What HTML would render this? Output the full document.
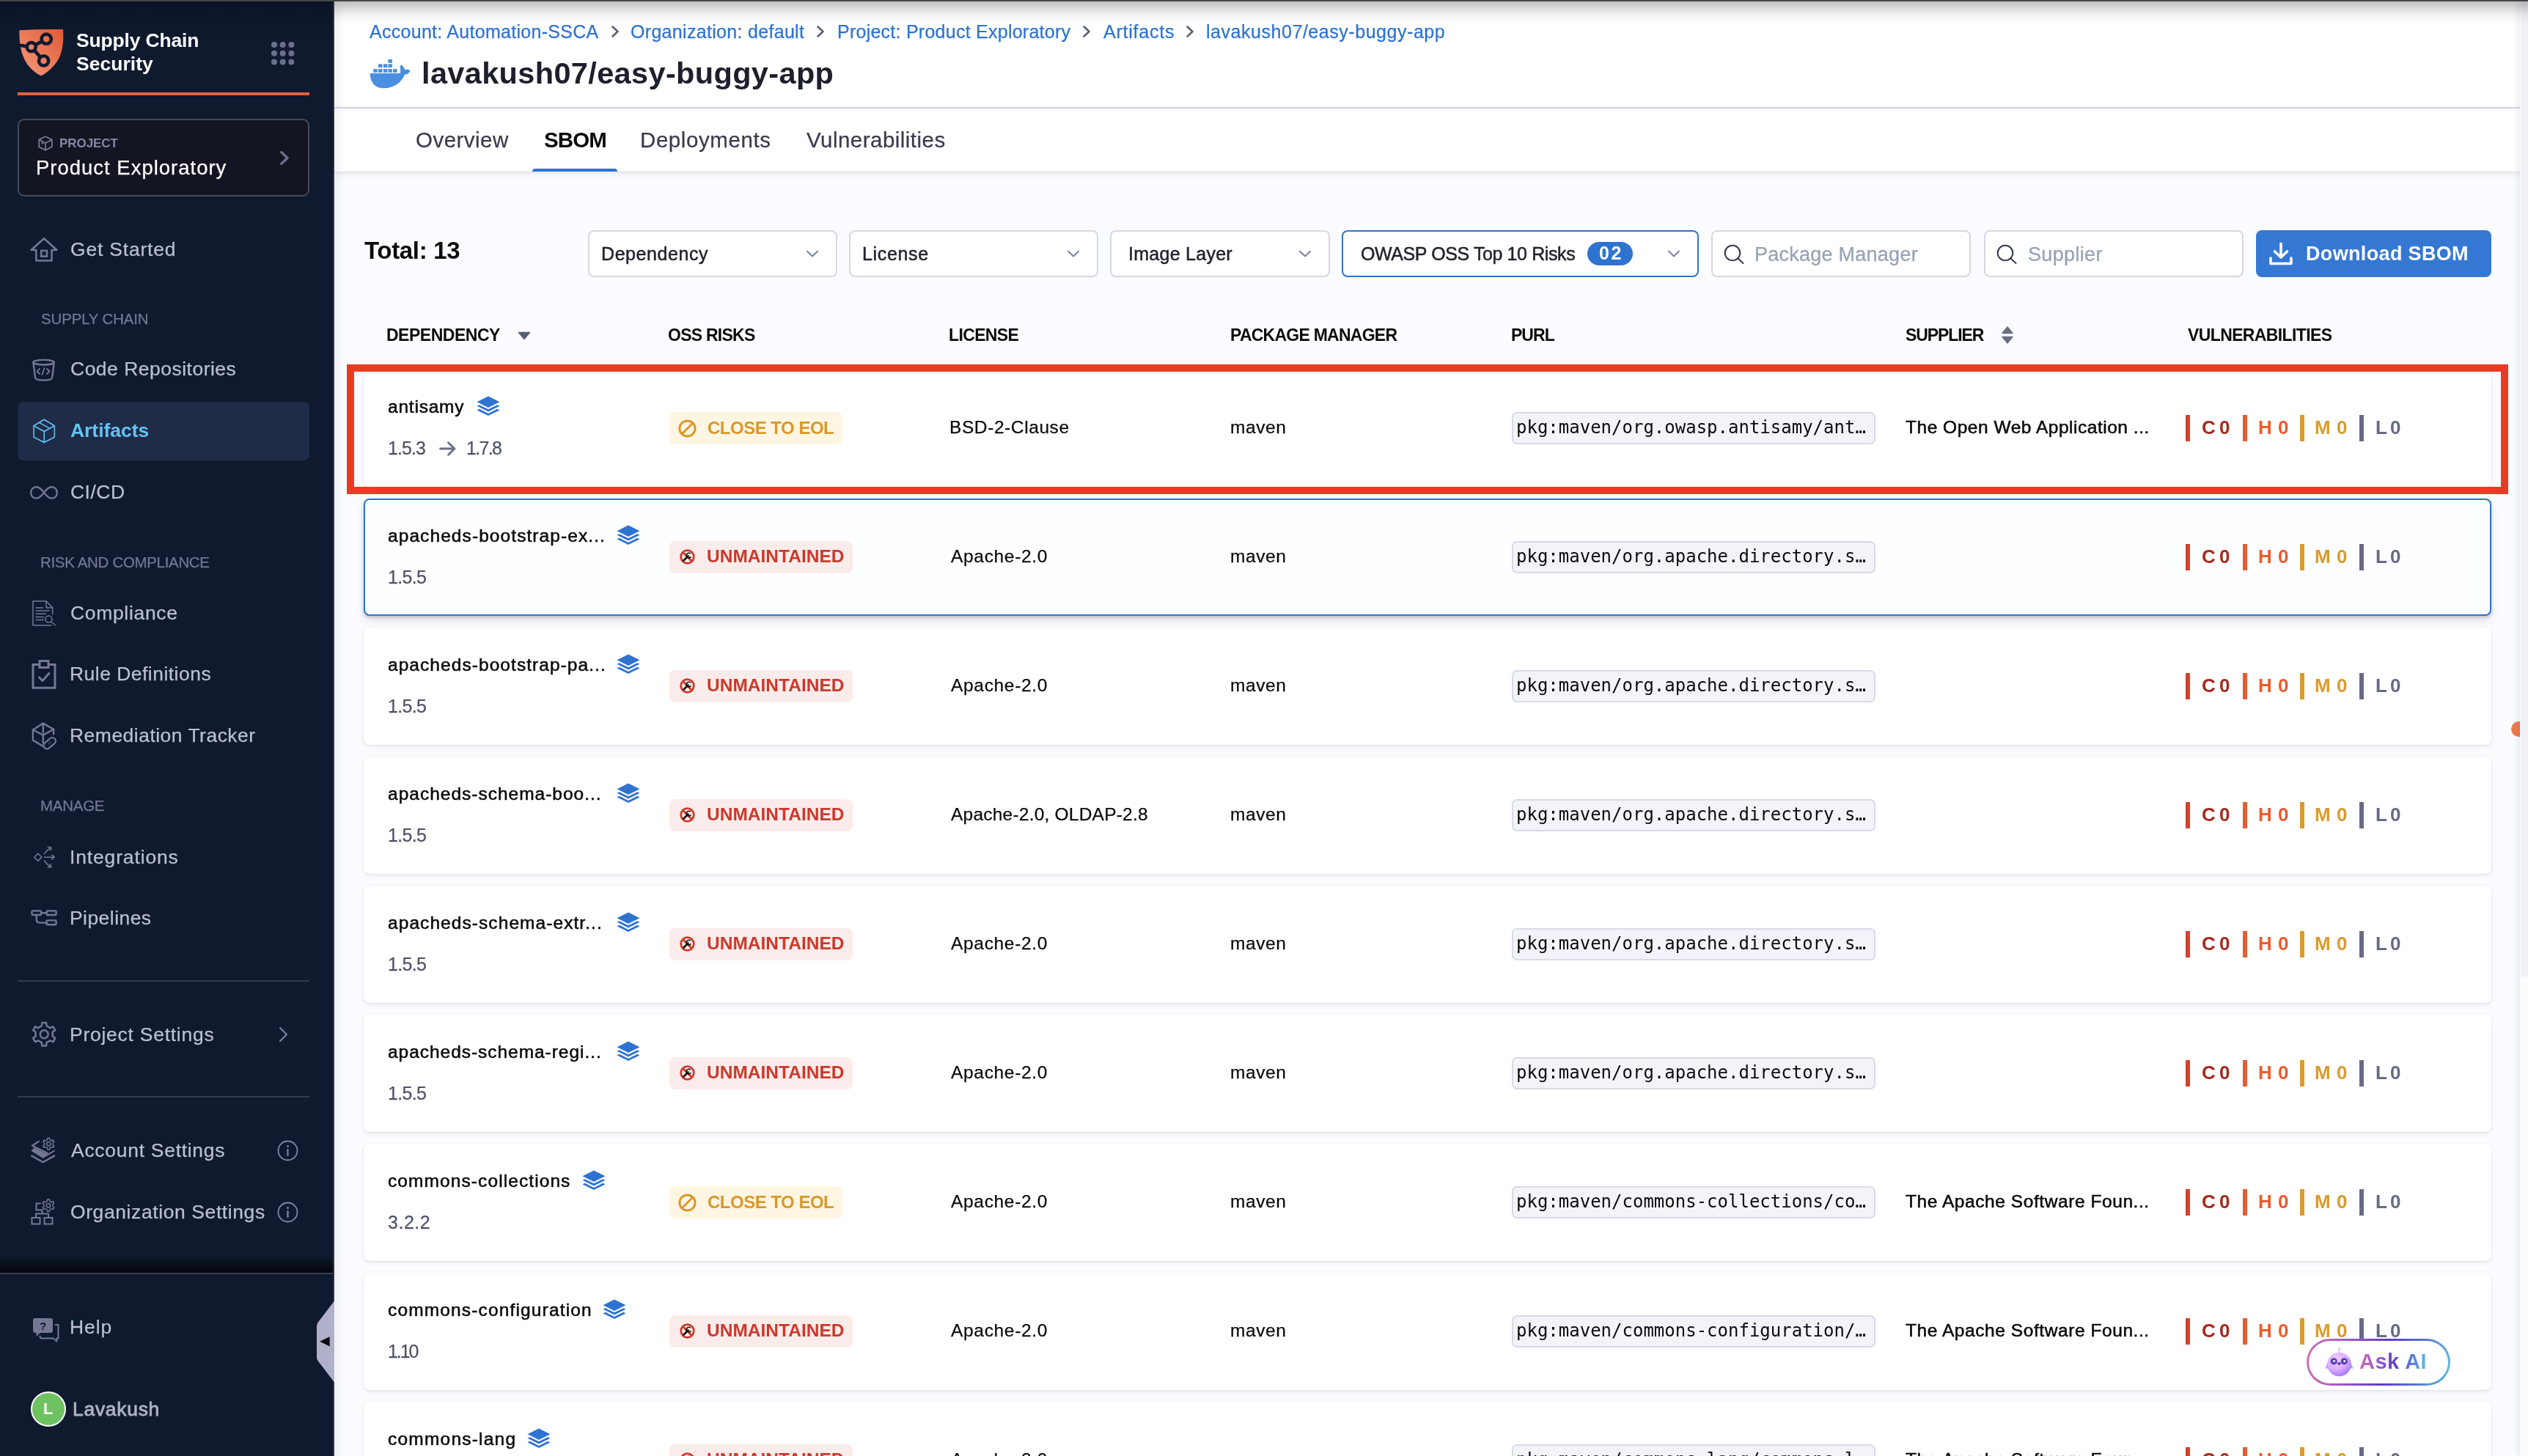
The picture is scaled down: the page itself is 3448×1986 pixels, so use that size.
<!DOCTYPE html>
<html lang="en"><head><meta charset="utf-8"><title>lavakush07/easy-buggy-app - SBOM</title>
<style>
*{box-sizing:border-box;margin:0;padding:0}
html,body{width:3448px;height:1986px;overflow:hidden}
body{position:relative;background:#fbfcff;font-family:"Liberation Sans",Arial,sans-serif;-webkit-font-smoothing:antialiased}
i{display:block;font-style:normal}
span{will-change:transform}
.avatar span{display:inline-block}
.r{-webkit-text-stroke:0.25px}
.topbar{position:absolute;left:0;top:0;width:3448px;height:2px;background:#444645;z-index:50}
.sidebar{position:absolute;left:0;top:0;width:456px;height:1986px;background:linear-gradient(#0b1426 0,#0f1a2e 60px,#0f1a2e 100%);border-right:2px solid #2f3044;overflow:hidden}
.orange-line{position:absolute;left:24px;top:126px;width:398px;height:4px;background:#e8613e}
.projbox{position:absolute;left:24px;top:162px;width:398px;height:106px;border:2px solid #464a5e;border-radius:9px;background:#141522}
.nav-active{position:absolute;left:24px;width:398px;height:80px;border-radius:8px;background:#1f2b47}
.sb-div{position:absolute;left:24px;width:398px;height:2px;background:#363a4c}
.sb-bottom-shadow{position:absolute;left:0;top:1712px;width:456px;height:24px;background:linear-gradient(rgba(0,0,0,0),rgba(0,0,0,.75))}
.sb-bottom-line{position:absolute;left:0;top:1736px;width:456px;height:2px;background:#3a3c4e}
.avatar{position:absolute;left:42px;top:1898px;width:48px;height:48px;border-radius:50%;background:#6ec25f;border:2.5px solid #fff;color:#fff;font-weight:bold;font-size:22px;line-height:43px;text-align:center}
.hdr{position:absolute;left:456px;top:0;width:2981px;height:148px;background:#fff;border-bottom:2px solid #d9dae6}
.tabsbar{position:absolute;left:456px;top:148px;width:2981px;height:86px;background:#fff;box-shadow:0 2px 10px rgba(40,41,61,.10),0 1px 2px rgba(40,41,61,.08)}
.topshade{position:absolute;left:456px;top:2px;width:2992px;height:34px;background:linear-gradient(rgba(0,0,0,.22) 0,rgba(0,0,0,.22) 3px,rgba(0,0,0,.16) 8px,rgba(0,0,0,.10) 13px,rgba(0,0,0,.055) 18px,rgba(0,0,0,.027) 23px,rgba(0,0,0,0) 30px);z-index:20}
.leftshade{position:absolute;left:457px;top:0;width:14px;height:1986px;background:linear-gradient(90deg,rgba(20,22,40,.05),rgba(20,22,40,.03) 40%,rgba(20,22,40,0));z-index:20}
.tab-underline{position:absolute;left:726px;top:230px;width:116px;height:4px;background:#2f73d1;border-radius:4px 4px 0 0}
.dd{position:absolute;top:314px;height:63.5px;border:2px solid #d6d7e4;border-radius:8px;background:#fff}
.dd.act{border-color:#2f73d1}
.cnt{position:absolute;left:2165px;top:330px;width:62px;height:32px;border-radius:16px;background:#2f73d1}
.btn{position:absolute;left:3077px;top:314px;width:321px;height:63.5px;border-radius:8px;background:#3578d3}
.card{position:absolute;left:496px;width:2902px;height:160px;background:#fff;border-radius:8px;box-shadow:0 1px 3px rgba(40,41,61,.10),0 3px 8px rgba(96,97,112,.08)}
.card.sel{border:2px solid #2f73d1;background:#fdfeff;box-shadow:0 2px 4px rgba(40,41,61,.2),0 6px 12px rgba(96,97,112,.18)}
.badge{position:absolute;left:913px;height:44px;border-radius:8px}
.badge.eol{width:235.5px;background:#fef6e2}
.badge.unm{width:249.5px;background:#faeceb}
.purl{position:absolute;left:2062px;width:495.5px;height:44px;border:2px solid #d9dae6;border-radius:7px;background:#f3f3fa;overflow:hidden}
.purl span{position:absolute;left:4px;top:-1px;font-family:"DejaVu Sans Mono","Liberation Mono",monospace;font-size:24px;line-height:40px;color:#0b0b0d;white-space:nowrap}
.vb{position:absolute;width:6px;height:36px}
.redbox{position:absolute;left:473px;top:497px;width:2948px;height:177px;border:10px solid #e63c24;z-index:10}
.rstrip{position:absolute;left:3437px;top:2px;width:11px;height:1984px;background:#fbfbfd;box-shadow:-3px 0 8px rgba(40,41,61,.10);z-index:15}
.rthumb{position:absolute;left:3438px;top:2px;width:10px;height:1331px;background:#f1f0f7;border-radius:0 0 5px 5px;z-index:16}
.odot{position:absolute;left:3425px;top:983.5px;width:12px;height:21px;background:#ee7a4b;border-radius:10.5px 0 0 10.5px;z-index:14}
.askai{position:absolute;left:3146px;top:1826px;width:196px;height:64px;border-radius:32px;background:linear-gradient(100deg,#d673b4 0%,#9c55c8 30%,#5a3bd2 55%,#5b7fd6 80%,#5fc0dc 100%);z-index:30}
.askai-in{position:absolute;left:3px;top:3px;right:3px;bottom:3px;border-radius:29px;background:#fff}
.askai-t{background:linear-gradient(95deg,#d070b0 0%,#8a4fcf 35%,#5a40d0 55%,#5b86d8 80%,#62c2dc 100%);-webkit-background-clip:text;background-clip:text;color:transparent !important;-webkit-text-fill-color:transparent}
</style></head>
<body>
<div class="topbar"></div>
<nav class="sidebar">
<svg style="position:absolute;left:24px;top:39px;" width="64" height="65" viewBox="0 0 64 65" fill="none"><defs><linearGradient id="shg" x1="0" y1="1" x2="1" y2="0"><stop offset="0" stop-color="#f39a7e"/><stop offset="1" stop-color="#e25a35"/></linearGradient></defs>
<path d="M2.5 2.2 Q32 0.5 62 1 Q64.5 34 50 50 Q41 60 32 64.5 Q22 60 13.5 49 Q1.5 32 2.5 2.2Z" fill="url(#shg)"/>
<g stroke="#0f1a2e" stroke-width="4.6" stroke-linecap="round"><path d="M18.7 25.1 L39.2 14.2"/><path d="M18.7 25.1 L35.6 43.9"/><path d="M18.7 25.1 L3 22.8"/></g>
<circle cx="39.2" cy="14.2" r="6.6" fill="#e8714e" stroke="#0f1a2e" stroke-width="4.6"/>
<circle cx="18.7" cy="25.1" r="6" fill="#ee8566" stroke="#0f1a2e" stroke-width="4.6"/>
<circle cx="35.6" cy="43.9" r="6.6" fill="#ec7d5c" stroke="#0f1a2e" stroke-width="4.6"/></svg>
<span style="position:absolute;left:103.8px;top:42.2px;font-size:26.5px;line-height:26.5px;font-weight:bold;color:#fff;letter-spacing:-0.17px;white-space:nowrap;">Supply Chain</span>
<span style="position:absolute;left:103.8px;top:74.4px;font-size:26.5px;line-height:26.5px;font-weight:bold;color:#fff;letter-spacing:0.04px;white-space:nowrap;">Security</span>
<svg style="position:absolute;left:369.8px;top:57px;" width="32" height="32" viewBox="0 0 32 32" fill="none"><circle cx="4.0" cy="4.0" r="4" fill="#6b6f89"/><circle cx="4.0" cy="15.7" r="4" fill="#6b6f89"/><circle cx="4.0" cy="27.4" r="4" fill="#6b6f89"/><circle cx="15.7" cy="4.0" r="4" fill="#6b6f89"/><circle cx="15.7" cy="15.7" r="4" fill="#6b6f89"/><circle cx="15.7" cy="27.4" r="4" fill="#6b6f89"/><circle cx="27.4" cy="4.0" r="4" fill="#6b6f89"/><circle cx="27.4" cy="15.7" r="4" fill="#6b6f89"/><circle cx="27.4" cy="27.4" r="4" fill="#6b6f89"/></svg>
<div class="orange-line"></div>
<div class="projbox"></div>
<svg style="position:absolute;left:52.3px;top:184.6px;" width="20" height="21" viewBox="0 0 21 22" fill="none"><g stroke="#8386a2" stroke-width="1.6" stroke-linejoin="round"><path d="M10.5 1.2 L19.8 5.8 V16 L10.5 20.8 L1.2 16 V5.8Z"/><path d="M1.2 5.8 L10.5 10.6 L19.8 5.8M10.5 10.6V20.8"/><path d="M4.5 10.2 L7.5 11.7"/></g></svg>
<span style="position:absolute;left:81.2px;top:186.9px;font-size:17px;line-height:17px;font-weight:bold;color:#8789a5;letter-spacing:-0.07px;white-space:nowrap;">PROJECT</span>
<span class="r" style="position:absolute;left:48.7px;top:214.9px;font-size:27.5px;line-height:27.5px;color:#fff;letter-spacing:0.99px;white-space:nowrap;">Product Exploratory</span>
<svg style="position:absolute;left:380px;top:204px;" width="16" height="23" viewBox="0 0 16 23" fill="none"><path d="M3.8 3.6 L12 11.5 L3.8 19.4" stroke="#6d708b" stroke-width="3.4" stroke-linecap="round" stroke-linejoin="round"/></svg>
<svg style="position:absolute;left:40px;top:321px;" width="40" height="38" viewBox="0 0 40 38" fill="none"><g stroke="#747892" stroke-width="2.5" stroke-linejoin="miter" stroke-linecap="butt"><path d="M20 4.2 L37.4 20 H30.6 V34.4 H9.3 V20 H2.6 Z" stroke-linejoin="round"/><rect x="16.2" y="20.9" width="7.8" height="7.7"/></g></svg>
<span class="r" style="position:absolute;left:95.7px;top:326.8px;font-size:26.5px;line-height:26.5px;color:#bcbfd3;letter-spacing:0.80px;white-space:nowrap;">Get Started</span>
<span class="r" style="position:absolute;left:55.7px;top:425.3px;font-size:20.5px;line-height:20.5px;color:#747892;letter-spacing:-0.17px;white-space:nowrap;">SUPPLY CHAIN</span>
<svg style="position:absolute;left:42px;top:488px;" width="34" height="34" viewBox="0 0 34 34" fill="none"><g stroke="#747892" stroke-width="2.4" stroke-linecap="round" stroke-linejoin="round"><ellipse cx="17.6" cy="6.2" rx="14.2" ry="3.3"/><path d="M3.4 6.2 L6 27 C6.4 29.6 11.6 30.6 17.6 30.6 C23.6 30.6 28.8 29.6 29.2 27 L31.8 6.2"/></g><g stroke="#747892" stroke-width="1.8" stroke-linecap="round" stroke-linejoin="round"><path d="M12 15 L8.5 18.5 L12 22"/><path d="M22 15 L25.5 18.5 L22 22"/><path d="M18.6 14 L15.4 23"/></g></svg>
<span class="r" style="position:absolute;left:95.7px;top:490.3px;font-size:26.5px;line-height:26.5px;color:#bcbfd3;letter-spacing:0.49px;white-space:nowrap;">Code Repositories</span>
<div class="nav-active" style="top:547.5px"></div>
<svg style="position:absolute;left:44px;top:570px;" width="33" height="36" viewBox="0 0 33 36" fill="none"><g stroke="#5ec2f4" stroke-width="1.6" stroke-linejoin="round" stroke-linecap="round"><path d="M16.2 2.3 L30.3 10.8 V26.2 L16.2 33.5 L2.1 26.2 V10.8Z"/><path d="M2.1 10.8 L16.2 18.5 L30.3 10.8M16.2 18.5V33.5"/><path d="M9.4 6.4 L24 14.4"/></g></svg>
<span style="position:absolute;left:96.4px;top:574.3px;font-size:26.5px;line-height:26.5px;font-weight:bold;color:#62c3f3;letter-spacing:-0.04px;white-space:nowrap;">Artifacts</span>
<svg style="position:absolute;left:40px;top:659px;" width="40" height="24" viewBox="0 0 40 24" fill="none"><path d="M20 12.9 C16 7.5 13 5.2 9.8 5.2 C5.2 5.2 2.2 8.4 2.2 12.9 C2.2 17.4 5.2 20.6 9.8 20.6 C13 20.6 16 18.3 20 12.9 C24 7.5 27 5.2 30.2 5.2 C34.8 5.2 37.8 8.4 37.8 12.9 C37.8 17.4 34.8 20.6 30.2 20.6 C27 20.6 24 18.3 20 12.9Z" stroke="#747892" stroke-width="2.4" stroke-linecap="round" stroke-linejoin="round"/></svg>
<span class="r" style="position:absolute;left:95.7px;top:658.3px;font-size:26.5px;line-height:26.5px;color:#bcbfd3;letter-spacing:0.48px;white-space:nowrap;">CI/CD</span>
<span class="r" style="position:absolute;left:54.9px;top:756.8px;font-size:20.5px;line-height:20.5px;color:#747892;letter-spacing:-0.33px;white-space:nowrap;">RISK AND COMPLIANCE</span>
<svg style="position:absolute;left:42.8px;top:819px;" width="36" height="36" viewBox="0 0 36 36" fill="none"><g stroke="#747892" stroke-width="1.5" stroke-linecap="round" stroke-linejoin="round"><path d="M28.7 19 V10 L20.1 1 H2 V33.9 H27"/><path d="M20.1 1 V10 H28.7"/><path d="M6.1 10 H15.5 M6.1 14.1 H24 M6.1 18.3 H19.5 M6.1 22.4 H16.5 M6.1 26.5 H16"/><circle cx="23.4" cy="25.5" r="4.6"/><path d="M26.8 29 L32.8 34"/></g></svg>
<span class="r" style="position:absolute;left:95.7px;top:822.8px;font-size:26.5px;line-height:26.5px;color:#bcbfd3;letter-spacing:0.67px;white-space:nowrap;">Compliance</span>
<svg style="position:absolute;left:42px;top:898px;" width="36" height="44" viewBox="0 0 36 44" fill="none"><g stroke="#747892" stroke-width="3" stroke-linejoin="miter"><path d="M12 8.5 H3 V40.3 H33 V8.5 H24"/><rect x="12" y="3.5" width="12" height="9"/></g><path d="M11.5 26 L16 30.5 L25 20.5" stroke="#747892" stroke-width="3" stroke-linejoin="round" stroke-linecap="round"/></svg>
<span class="r" style="position:absolute;left:94.8px;top:906.3px;font-size:26.5px;line-height:26.5px;color:#bcbfd3;letter-spacing:0.47px;white-space:nowrap;">Rule Definitions</span>
<svg style="position:absolute;left:42px;top:985px;" width="36" height="40" viewBox="0 0 36 40" fill="none"><g stroke="#747892" stroke-width="2.4" stroke-linecap="round" stroke-linejoin="round"><path d="M31.1 16.4 V9.8 L16.8 1.6 L2.9 10.5 V24.7 L16.8 32.9"/><path d="M2.9 10.5 L16.8 17.7 L31.1 9.8"/><path d="M16.8 1.6 V14.6 M16.8 17.7 V28.3"/></g><g transform="rotate(-40 25.7 28.8)"><rect x="16.4" y="24.3" width="18.6" height="9" rx="4.5" fill="#0f1a2e" stroke="#747892" stroke-width="2.2"/><path d="M24 28.8 H24.8 M26.8 28.8 H27.6" stroke="#747892" stroke-width="2.6"/></g></svg>
<span class="r" style="position:absolute;left:94.8px;top:990.3px;font-size:26.5px;line-height:26.5px;color:#bcbfd3;letter-spacing:0.48px;white-space:nowrap;">Remediation Tracker</span>
<span class="r" style="position:absolute;left:54.9px;top:1088.8px;font-size:20.5px;line-height:20.5px;color:#747892;letter-spacing:-0.26px;white-space:nowrap;">MANAGE</span>
<svg style="position:absolute;left:45px;top:1153px;" width="32" height="32" viewBox="0 0 32 32" fill="none"><g stroke="#747892" stroke-width="1.5" stroke-linecap="round" stroke-linejoin="round"><path d="M1.7 16.3 L6.8 11.2 L11.9 16.3 L6.8 21.4Z"/><path d="M15.4 16.2 H29 M25.6 13.2 L29.2 16.2 L25.6 19.2"/><path d="M15.4 11.6 Q19.5 6 24.4 3 M20.4 2.6 L24.6 2.8 L24.2 7"/><path d="M15.4 21 Q19.5 26.6 24.4 29.5 M20.4 30 L24.6 29.7 L24.2 25.5"/></g></svg>
<span class="r" style="position:absolute;left:94.6px;top:1155.8px;font-size:26.5px;line-height:26.5px;color:#bcbfd3;letter-spacing:0.85px;white-space:nowrap;">Integrations</span>
<svg style="position:absolute;left:41px;top:1240px;" width="38" height="26" viewBox="0 0 38 26" fill="none"><g stroke="#747892" stroke-width="2.4" stroke-linecap="round" stroke-linejoin="round"><rect x="2.5" y="2.4" width="12.6" height="5.6" rx="1.2"/><rect x="22.6" y="2.4" width="13" height="5.6" rx="1.2"/><rect x="22.6" y="15.4" width="13" height="5.8" rx="1.2"/><path d="M15.1 5.2 H22.6"/><path d="M8.8 8 V14.6 Q8.8 18.6 12.8 18.6 H22.6"/></g></svg>
<span class="r" style="position:absolute;left:94.8px;top:1239.3px;font-size:26.5px;line-height:26.5px;color:#bcbfd3;letter-spacing:0.44px;white-space:nowrap;">Pipelines</span>
<div class="sb-div" style="top:1337px"></div>
<svg style="position:absolute;left:43px;top:1393px;" width="34" height="36" viewBox="0 0 34 36" fill="none"><path d="M13.88 6.27 L14.37 1.95 L20.03 1.95 L20.52 6.27 L25.44 9.11 L29.42 7.37 L32.25 12.28 L28.76 14.86 L28.76 20.54 L32.25 23.12 L29.42 28.03 L25.44 26.29 L20.52 29.13 L20.03 33.45 L14.37 33.45 L13.88 29.13 L8.96 26.29 L4.98 28.03 L2.15 23.12 L5.64 20.54 L5.64 14.86 L2.15 12.28 L4.98 7.37 L8.96 9.11Z" stroke="#747892" stroke-width="2.5" stroke-linejoin="round"/><circle cx="17.2" cy="17.7" r="5.5" stroke="#747892" stroke-width="2.5"/></svg>
<span class="r" style="position:absolute;left:94.8px;top:1398.0px;font-size:26.5px;line-height:26.5px;color:#bcbfd3;letter-spacing:0.74px;white-space:nowrap;">Project Settings</span>
<svg style="position:absolute;left:378px;top:1399px;" width="16" height="24" viewBox="0 0 16 24" fill="none"><path d="M4 3 L13 12 L4 21" stroke="#8386a2" stroke-width="2" stroke-linecap="round" stroke-linejoin="round"/></svg>
<div class="sb-div" style="top:1495px"></div>
<svg style="position:absolute;left:42px;top:1550px;" width="36" height="38" viewBox="0 0 36 38" fill="none"><path d="M11 6.9 L1.8 12.7 L22.6 22.8" stroke="#747892" stroke-width="2.2" stroke-linecap="round" stroke-linejoin="round"/><path d="M0.4 19.7 L4.4 15.4 L22.6 24 L32.4 18.4 L33 20.3 L16.7 30 Z" fill="#747892"/><path d="M1.4 26.6 L16.7 35.3 L31.9 26.6" stroke="#747892" stroke-width="2.4" stroke-linecap="round" stroke-linejoin="round"/><path d="M22.65 4.53 L22.88 2.33 L25.72 2.33 L25.95 4.53 L28.38 5.94 L30.41 5.04 L31.83 7.49 L30.03 8.79 L30.03 11.61 L31.83 12.91 L30.41 15.36 L28.38 14.46 L25.95 15.87 L25.72 18.07 L22.88 18.07 L22.65 15.87 L20.22 14.46 L18.19 15.36 L16.77 12.91 L18.57 11.61 L18.57 8.79 L16.77 7.49 L18.19 5.04 L20.22 5.94Z" stroke="#747892" stroke-width="1.5" stroke-linejoin="round" fill="#0f1a2e"/><circle cx="24.3" cy="10.2" r="2.6" stroke="#747892" stroke-width="1.5"/></svg>
<span class="r" style="position:absolute;left:96.9px;top:1555.8px;font-size:26.5px;line-height:26.5px;color:#bcbfd3;letter-spacing:0.71px;white-space:nowrap;">Account Settings</span>
<svg style="position:absolute;left:377.5px;top:1554.5px;" width="29" height="29" viewBox="0 0 29 29" fill="none"><circle cx="14.5" cy="14.5" r="13" stroke="#8386a2" stroke-width="1.8"/><path d="M14.5 13 V21" stroke="#8386a2" stroke-width="2.2" stroke-linecap="round"/><circle cx="14.5" cy="8.5" r="1.5" fill="#8386a2"/></svg>
<svg style="position:absolute;left:42px;top:1635px;" width="36" height="38" viewBox="0 0 36 38" fill="none"><g stroke="#747892" stroke-width="2" stroke-linejoin="miter"><rect x="1.5" y="26" width="11" height="8.5"/><rect x="18.5" y="26" width="11" height="8.5"/><path d="M7 26 V20.5 H24 V26 M15.5 20.5 V15.5"/><path d="M14 6.5 H7.5 V15.5 H16"/></g><path d="M22.30 3.34 L22.53 1.03 L25.47 1.03 L25.70 3.34 L28.22 4.80 L30.34 3.84 L31.81 6.39 L29.92 7.74 L29.92 10.66 L31.81 12.01 L30.34 14.56 L28.22 13.60 L25.70 15.06 L25.47 17.37 L22.53 17.37 L22.30 15.06 L19.78 13.60 L17.66 14.56 L16.19 12.01 L18.08 10.66 L18.08 7.74 L16.19 6.39 L17.66 3.84 L19.78 4.80Z" stroke="#747892" stroke-width="1.5" stroke-linejoin="round" fill="#0f1a2e"/><circle cx="24" cy="9.2" r="2.8" stroke="#747892" stroke-width="1.5"/></svg>
<span class="r" style="position:absolute;left:95.8px;top:1639.8px;font-size:26.5px;line-height:26.5px;color:#bcbfd3;letter-spacing:0.59px;white-space:nowrap;">Organization Settings</span>
<svg style="position:absolute;left:377.5px;top:1638.5px;" width="29" height="29" viewBox="0 0 29 29" fill="none"><circle cx="14.5" cy="14.5" r="13" stroke="#8386a2" stroke-width="1.8"/><path d="M14.5 13 V21" stroke="#8386a2" stroke-width="2.2" stroke-linecap="round"/><circle cx="14.5" cy="8.5" r="1.5" fill="#8386a2"/></svg>
<div class="sb-bottom-shadow"></div><div class="sb-bottom-line"></div>
<svg style="position:absolute;left:44px;top:1797px;" width="38" height="34" viewBox="0 0 38 34" fill="none"><path d="M4 1 H25 Q28 1 28 4 V18 Q28 21 25 21 H11 L5.5 26 V21 H4 Q1 21 1 18 V4 Q1 1 4 1Z" fill="#747892"/><path d="M31.5 10 H35.5 V28.5 H33.5 V32.5 L28.5 28.5 H13 Q10.5 28.5 10.5 25.5" stroke="#747892" stroke-width="2" stroke-linejoin="round" stroke-linecap="round"/><text x="14.5" y="16.5" font-family="Liberation Sans, sans-serif" font-weight="bold" font-size="15" fill="#0f1a2e" text-anchor="middle">?</text></svg>
<span class="r" style="position:absolute;left:94.8px;top:1796.8px;font-size:26.5px;line-height:26.5px;color:#bcbfd3;letter-spacing:0.88px;white-space:nowrap;">Help</span>
<div class="avatar"><span>L</span></div>
<span style="position:absolute;left:99.3px;top:1909.0px;font-size:26.5px;line-height:26.5px;color:#b0b2c9;letter-spacing:0.70px;white-space:nowrap;-webkit-text-stroke:0.8px #b0b2c9;">Lavakush</span>
</nav>
<svg style="position:absolute;left:430px;top:1772px;z-index:5;" width="26" height="116" viewBox="0 0 26 116" fill="none"><path d="M26 2.5 L3.5 32 Q2 34 2 37 V79 Q2 82 3.5 84 L26 113.5Z" fill="#b0b1c8"/><path d="M6 57.7 L19.7 51.2 V64.5Z" fill="#0b0b12"/></svg>
<main>
<header class="hdr"></header><div class="tabsbar"></div><div class="tabshadow"></div>
<div class="breadcrumbs">
<span class="r" style="position:absolute;left:504.3px;top:30.9px;font-size:25px;line-height:25px;color:#2e72d0;letter-spacing:0.28px;white-space:nowrap;">Account: Automation-SSCA</span>
<span class="r" style="position:absolute;left:860.4px;top:30.9px;font-size:25px;line-height:25px;color:#2e72d0;letter-spacing:0.31px;white-space:nowrap;">Organization: default</span>
<span class="r" style="position:absolute;left:1141.5px;top:30.9px;font-size:25px;line-height:25px;color:#2e72d0;letter-spacing:0.25px;white-space:nowrap;">Project: Product Exploratory</span>
<span class="r" style="position:absolute;left:1504.5px;top:30.9px;font-size:25px;line-height:25px;color:#2e72d0;letter-spacing:0.77px;white-space:nowrap;">Artifacts</span>
<span class="r" style="position:absolute;left:1644.8px;top:30.9px;font-size:25px;line-height:25px;color:#2e72d0;letter-spacing:0.54px;white-space:nowrap;">lavakush07/easy-buggy-app</span>
<svg style="position:absolute;left:833px;top:34px;" width="12" height="18" viewBox="0 0 12 18" fill="none"><path d="M2.5 2.5 L9.5 9 L2.5 15.5" stroke="#566074" stroke-width="2.6" stroke-linecap="round" stroke-linejoin="round"/></svg>
<svg style="position:absolute;left:1113px;top:34px;" width="12" height="18" viewBox="0 0 12 18" fill="none"><path d="M2.5 2.5 L9.5 9 L2.5 15.5" stroke="#566074" stroke-width="2.6" stroke-linecap="round" stroke-linejoin="round"/></svg>
<svg style="position:absolute;left:1476px;top:34px;" width="12" height="18" viewBox="0 0 12 18" fill="none"><path d="M2.5 2.5 L9.5 9 L2.5 15.5" stroke="#566074" stroke-width="2.6" stroke-linecap="round" stroke-linejoin="round"/></svg>
<svg style="position:absolute;left:1617px;top:34px;" width="12" height="18" viewBox="0 0 12 18" fill="none"><path d="M2.5 2.5 L9.5 9 L2.5 15.5" stroke="#566074" stroke-width="2.6" stroke-linecap="round" stroke-linejoin="round"/></svg>
</div>
<svg style="position:absolute;left:504px;top:80px;" width="57" height="41" viewBox="0 0 57 41" fill="none"><g fill="#4a90e2"><rect x="5.2" y="14.1" width="5.5" height="4.8"/><rect x="12" y="14.1" width="5.5" height="4.8"/><rect x="18.9" y="14.1" width="5.5" height="4.8"/><rect x="25.4" y="14.1" width="5.5" height="4.8"/><rect x="32.1" y="14.1" width="5.5" height="4.8"/><rect x="12" y="7.3" width="5.5" height="4.8"/><rect x="18.9" y="7.3" width="5.5" height="4.8"/><rect x="25.4" y="7.3" width="5.5" height="4.8"/><rect x="25.4" y="1" width="5.5" height="4.8"/><path d="M0.8 19.9 L41.2 19.9 C42.8 17.5 42.2 14 41.6 12 C41.2 10.5 42.5 9.2 43.7 8.6 C45.5 10 47.5 12.2 48.2 15 C50.5 14.2 53.5 14.8 55.6 16.4 C54 20 51 21.8 48 21.8 C43.5 33 33 40.3 19.5 40.3 C7 40.3 0.5 31.5 0.8 19.9 Z"/></g></svg>
<span style="position:absolute;left:575.1px;top:79.0px;font-size:41.5px;line-height:41.5px;font-weight:bold;color:#1e1f2c;letter-spacing:0.35px;white-space:nowrap;">lavakush07/easy-buggy-app</span>
<div class="tabs">
<span class="r" style="position:absolute;left:567.2px;top:176.1px;font-size:29.5px;line-height:29.5px;color:#3a3c4d;letter-spacing:0.48px;white-space:nowrap;">Overview</span>
<span style="position:absolute;left:742.2px;top:176.1px;font-size:29.5px;line-height:29.5px;font-weight:bold;color:#0b0b0d;letter-spacing:-0.91px;white-space:nowrap;">SBOM</span>
<span class="r" style="position:absolute;left:873.1px;top:176.1px;font-size:29.5px;line-height:29.5px;color:#3a3c4d;letter-spacing:0.58px;white-space:nowrap;">Deployments</span>
<span class="r" style="position:absolute;left:1099.7px;top:176.1px;font-size:29.5px;line-height:29.5px;color:#3a3c4d;letter-spacing:0.47px;white-space:nowrap;">Vulnerabilities</span>
<div class="tab-underline"></div></div>
<div class="topshade"></div><div class="leftshade"></div>
<div class="toolbar">
<span style="position:absolute;left:496.8px;top:324.9px;font-size:33px;line-height:33px;font-weight:bold;color:#0b0b0d;letter-spacing:-0.34px;white-space:nowrap;">Total: 13</span>
<div class="dd" style="left:802px;width:339.6px"></div>
<span style="position:absolute;left:820.0px;top:333.8px;font-size:25px;line-height:25px;color:#22222e;letter-spacing:0.58px;white-space:nowrap;-webkit-text-stroke:0.5px #22222e;">Dependency</span>
<svg style="position:absolute;left:1098px;top:340px;" width="20" height="13" viewBox="0 0 20 13" fill="none"><path d="M3 2.8 L10 9.4 L17 2.8" stroke="#7d80a0" stroke-width="2" stroke-linecap="round" stroke-linejoin="round"/></svg>
<div class="dd" style="left:1158.4px;width:339.2px"></div>
<span style="position:absolute;left:1175.5px;top:333.8px;font-size:25px;line-height:25px;color:#22222e;letter-spacing:0.66px;white-space:nowrap;-webkit-text-stroke:0.5px #22222e;">License</span>
<svg style="position:absolute;left:1454px;top:340px;" width="20" height="13" viewBox="0 0 20 13" fill="none"><path d="M3 2.8 L10 9.4 L17 2.8" stroke="#7d80a0" stroke-width="2" stroke-linecap="round" stroke-linejoin="round"/></svg>
<div class="dd" style="left:1514px;width:299.5px"></div>
<span style="position:absolute;left:1538.7px;top:333.8px;font-size:25px;line-height:25px;color:#22222e;letter-spacing:0.27px;white-space:nowrap;-webkit-text-stroke:0.5px #22222e;">Image Layer</span>
<svg style="position:absolute;left:1770px;top:340px;" width="20" height="13" viewBox="0 0 20 13" fill="none"><path d="M3 2.8 L10 9.4 L17 2.8" stroke="#7d80a0" stroke-width="2" stroke-linecap="round" stroke-linejoin="round"/></svg>
<div class="dd act" style="left:1830px;width:486.5px"></div>
<span style="position:absolute;left:1856.3px;top:333.8px;font-size:25px;line-height:25px;color:#22222e;letter-spacing:-0.40px;white-space:nowrap;-webkit-text-stroke:0.5px #22222e;">OWASP OSS Top 10 Risks</span>
<div class="cnt"></div>
<span style="position:absolute;left:2180.5px;top:333.0px;font-size:25px;line-height:25px;font-weight:bold;color:#fff;letter-spacing:2.65px;white-space:nowrap;">02</span>
<svg style="position:absolute;left:2273px;top:340px;" width="20" height="13" viewBox="0 0 20 13" fill="none"><path d="M3 2.8 L10 9.4 L17 2.8" stroke="#7d80a0" stroke-width="2" stroke-linecap="round" stroke-linejoin="round"/></svg>
<div class="dd" style="left:2333.5px;width:354.5px"></div>
<svg style="position:absolute;left:2351px;top:333px;" width="29" height="28" viewBox="0 0 29 28" fill="none"><circle cx="12" cy="12" r="10.3" stroke="#3c3f50" stroke-width="2.1"/><path d="M19.5 19.5 L26.5 26" stroke="#3c3f50" stroke-width="2.1" stroke-linecap="round"/></svg>
<span class="r" style="position:absolute;left:2393.1px;top:333.7px;font-size:27px;line-height:27px;color:#97a1b4;letter-spacing:0.25px;white-space:nowrap;">Package Manager</span>
<div class="dd" style="left:2705.5px;width:354.5px"></div>
<svg style="position:absolute;left:2723px;top:333px;" width="29" height="28" viewBox="0 0 29 28" fill="none"><circle cx="12" cy="12" r="10.3" stroke="#3c3f50" stroke-width="2.1"/><path d="M19.5 19.5 L26.5 26" stroke="#3c3f50" stroke-width="2.1" stroke-linecap="round"/></svg>
<span class="r" style="position:absolute;left:2766.2px;top:333.7px;font-size:27px;line-height:27px;color:#97a1b4;letter-spacing:0.33px;white-space:nowrap;">Supplier</span>
<div class="btn"></div>
<svg style="position:absolute;left:3094px;top:329px;" width="34" height="34" viewBox="0 0 34 34" fill="none"><g stroke="#fff" stroke-width="3.6" stroke-linecap="round" stroke-linejoin="round"><path d="M17 3.5 V21.5"/><path d="M8.5 14 L17 22 L25.5 14"/><path d="M3 23 V30.5 H31 V23"/></g></svg>
<span style="position:absolute;left:3144.5px;top:333.1px;font-size:27px;line-height:27px;font-weight:bold;color:#fff;letter-spacing:0.34px;white-space:nowrap;">Download SBOM</span>
<span style="position:absolute;left:526.7px;top:445.7px;font-size:23px;line-height:23px;font-weight:bold;color:#0b0b0d;letter-spacing:-0.49px;white-space:nowrap;">DEPENDENCY</span>
<span style="position:absolute;left:911.0px;top:445.7px;font-size:23px;line-height:23px;font-weight:bold;color:#0b0b0d;letter-spacing:-0.75px;white-space:nowrap;">OSS RISKS</span>
<span style="position:absolute;left:1294.0px;top:445.7px;font-size:23px;line-height:23px;font-weight:bold;color:#0b0b0d;letter-spacing:-0.63px;white-space:nowrap;">LICENSE</span>
<span style="position:absolute;left:1677.5px;top:445.7px;font-size:23px;line-height:23px;font-weight:bold;color:#0b0b0d;letter-spacing:-0.75px;white-space:nowrap;">PACKAGE MANAGER</span>
<span style="position:absolute;left:2061.0px;top:445.7px;font-size:23px;line-height:23px;font-weight:bold;color:#0b0b0d;letter-spacing:-0.97px;white-space:nowrap;">PURL</span>
<span style="position:absolute;left:2599.4px;top:445.7px;font-size:23px;line-height:23px;font-weight:bold;color:#0b0b0d;letter-spacing:-1.09px;white-space:nowrap;">SUPPLIER</span>
<span style="position:absolute;left:2983.5px;top:445.7px;font-size:23px;line-height:23px;font-weight:bold;color:#0b0b0d;letter-spacing:-0.62px;white-space:nowrap;">VULNERABILITIES</span>
<svg style="position:absolute;left:705.5px;top:452px;" width="18" height="12" viewBox="0 0 18 12" fill="none"><path d="M1.5 1.5 H16.5 L9 10.5Z" fill="#5a5d78" stroke="#5a5d78" stroke-width="1.5" stroke-linejoin="round"/></svg>
<svg style="position:absolute;left:2729px;top:444px;" width="18" height="26" viewBox="0 0 18 26" fill="none"><path d="M2 10.5 L9 2 L16 10.5Z M2 15.5 L9 24 L16 15.5Z" fill="#6b6d85" stroke="#6b6d85" stroke-width="1.5" stroke-linejoin="round"/></svg>
</div>
<div class="table">
<section class="row">
<div class="card" style="top:504px"></div>
<span style="position:absolute;left:529.4px;top:542.9px;font-size:24.5px;line-height:24.5px;color:#0b0b0d;letter-spacing:0.79px;white-space:nowrap;-webkit-text-stroke:0.55px #0b0b0d;">antisamy</span>
<svg style="position:absolute;left:649.5px;top:540px;" width="32" height="28" viewBox="0 0 32 28" fill="none"><g fill="#2f73d1"><path d="M16 0.5 L31.5 8.2 L16 15.9 L0.5 8.2Z"/><path d="M3.7 12.2 L0.5 13.8 L16 21.5 L31.5 13.8 L28.3 12.2 L16 18.3Z"/><path d="M3.7 17.8 L0.5 19.4 L16 27.1 L31.5 19.4 L28.3 17.8 L16 23.9Z"/></g></svg>
<span class="r" style="position:absolute;left:528.5px;top:599.0px;font-size:25px;line-height:25px;color:#4f5168;letter-spacing:-0.91px;white-space:nowrap;">1.5.3</span>
<svg style="position:absolute;left:598px;top:601px;" width="25" height="22" viewBox="0 0 25 22" fill="none"><path d="M2.5 11 H21.5 M13.5 2.8 L22 11 L13.5 19.2" stroke="#6b6d85" stroke-width="2.8" stroke-linecap="round" stroke-linejoin="round"/></svg>
<span class="r" style="position:absolute;left:636.1px;top:599.0px;font-size:25px;line-height:25px;color:#4f5168;letter-spacing:-1.66px;white-space:nowrap;">1.7.8</span>
<div class="badge eol" style="top:562px"></div>
<svg style="position:absolute;left:924.5px;top:571.5px;" width="25" height="25" viewBox="0 0 25 25" fill="none"><circle cx="12.5" cy="12.5" r="10.6" stroke="#d9982b" stroke-width="3"/><path d="M5.3 19.7 L19.7 5.3" stroke="#d9982b" stroke-width="3"/></svg>
<span style="position:absolute;left:964.6px;top:571.6px;font-size:24px;line-height:24px;font-weight:bold;color:#d9982b;letter-spacing:-0.50px;white-space:nowrap;">CLOSE TO EOL</span>
<span class="r" style="position:absolute;left:1294.5px;top:571.1px;font-size:24.5px;line-height:24.5px;color:#0b0b0d;letter-spacing:0.59px;white-space:nowrap;">BSD-2-Clause</span>
<span class="r" style="position:absolute;left:1678.4px;top:571.1px;font-size:24.5px;line-height:24.5px;color:#0b0b0d;letter-spacing:0.57px;white-space:nowrap;">maven</span>
<div class="purl" style="top:562px"><span>pkg:maven/org.owasp.antisamy/ant…</span></div>
<span style="position:absolute;left:2599.0px;top:571.1px;font-size:24.5px;line-height:24.5px;color:#0b0b0d;letter-spacing:0.52px;white-space:nowrap;-webkit-text-stroke:0.55px #0b0b0d;">The Open Web Application ...</span>
<i class="vb" style="left:2981px;top:566px;background:#d0432e"></i><span style="position:absolute;left:3002.9px;top:570.3px;font-size:26px;line-height:26px;font-weight:bold;color:#a52a1d;white-space:nowrap;">C</span><span style="position:absolute;left:3026.8px;top:570.3px;font-size:26px;line-height:26px;font-weight:bold;color:#a52a1d;white-space:nowrap;">0</span><i class="vb" style="left:3059px;top:566px;background:#ea5c2e"></i><span style="position:absolute;left:3079.8px;top:570.3px;font-size:26px;line-height:26px;font-weight:bold;color:#ea5c2e;white-space:nowrap;">H</span><span style="position:absolute;left:3106.7px;top:570.3px;font-size:26px;line-height:26px;font-weight:bold;color:#ea5c2e;white-space:nowrap;">0</span><i class="vb" style="left:3137px;top:566px;background:#d99b2e"></i><span style="position:absolute;left:3157.3px;top:570.3px;font-size:26px;line-height:26px;font-weight:bold;color:#d99b2e;white-space:nowrap;">M</span><span style="position:absolute;left:3186.5px;top:570.3px;font-size:26px;line-height:26px;font-weight:bold;color:#d99b2e;white-space:nowrap;">0</span><i class="vb" style="left:3217.8px;top:566px;background:#686a85"></i><span style="position:absolute;left:3239.9px;top:570.3px;font-size:26px;line-height:26px;font-weight:bold;color:#686a85;white-space:nowrap;">L</span><span style="position:absolute;left:3260.0px;top:570.3px;font-size:26px;line-height:26px;font-weight:bold;color:#686a85;white-space:nowrap;">0</span>
</section>
<section class="row">
<div class="card sel" style="top:680px"></div>
<span style="position:absolute;left:529.4px;top:718.9px;font-size:24.5px;line-height:24.5px;color:#0b0b0d;letter-spacing:1.08px;white-space:nowrap;-webkit-text-stroke:0.55px #0b0b0d;">apacheds-bootstrap-ex...</span>
<svg style="position:absolute;left:840.5px;top:716px;" width="32" height="28" viewBox="0 0 32 28" fill="none"><g fill="#2f73d1"><path d="M16 0.5 L31.5 8.2 L16 15.9 L0.5 8.2Z"/><path d="M3.7 12.2 L0.5 13.8 L16 21.5 L31.5 13.8 L28.3 12.2 L16 18.3Z"/><path d="M3.7 17.8 L0.5 19.4 L16 27.1 L31.5 19.4 L28.3 17.8 L16 23.9Z"/></g></svg>
<span class="r" style="position:absolute;left:528.5px;top:775.0px;font-size:25px;line-height:25px;color:#4f5168;letter-spacing:-0.67px;white-space:nowrap;">1.5.5</span>
<div class="badge unm" style="top:738px"></div>
<svg style="position:absolute;left:926.5px;top:749px;" width="21" height="21" viewBox="0 0 21 21" fill="none"><circle cx="10.5" cy="10.5" r="8.8" stroke="#cf3b2b" stroke-width="2.8"/><path d="M4.3 4.3 L16.7 16.7" stroke="#cf3b2b" stroke-width="2.8"/><path d="M5.5 15.5 L11.5 9.5" stroke="#111" stroke-width="2.6" stroke-linecap="round"/><path d="M14.8 6.2 A3.3 3.3 0 1 0 15.3 10.3" stroke="#111" stroke-width="1.7" fill="none"/></svg>
<span style="position:absolute;left:964.0px;top:747.1px;font-size:24.5px;line-height:24.5px;font-weight:bold;color:#cb392b;letter-spacing:0.01px;white-space:nowrap;">UNMAINTAINED</span>
<span class="r" style="position:absolute;left:1296.5px;top:747.1px;font-size:24.5px;line-height:24.5px;color:#0b0b0d;letter-spacing:0.68px;white-space:nowrap;">Apache-2.0</span>
<span class="r" style="position:absolute;left:1678.4px;top:747.1px;font-size:24.5px;line-height:24.5px;color:#0b0b0d;letter-spacing:0.57px;white-space:nowrap;">maven</span>
<div class="purl" style="top:738px"><span>pkg:maven/org.apache.directory.s…</span></div>
<i class="vb" style="left:2981px;top:742px;background:#d0432e"></i><span style="position:absolute;left:3002.9px;top:746.3px;font-size:26px;line-height:26px;font-weight:bold;color:#a52a1d;white-space:nowrap;">C</span><span style="position:absolute;left:3026.8px;top:746.3px;font-size:26px;line-height:26px;font-weight:bold;color:#a52a1d;white-space:nowrap;">0</span><i class="vb" style="left:3059px;top:742px;background:#ea5c2e"></i><span style="position:absolute;left:3079.8px;top:746.3px;font-size:26px;line-height:26px;font-weight:bold;color:#ea5c2e;white-space:nowrap;">H</span><span style="position:absolute;left:3106.7px;top:746.3px;font-size:26px;line-height:26px;font-weight:bold;color:#ea5c2e;white-space:nowrap;">0</span><i class="vb" style="left:3137px;top:742px;background:#d99b2e"></i><span style="position:absolute;left:3157.3px;top:746.3px;font-size:26px;line-height:26px;font-weight:bold;color:#d99b2e;white-space:nowrap;">M</span><span style="position:absolute;left:3186.5px;top:746.3px;font-size:26px;line-height:26px;font-weight:bold;color:#d99b2e;white-space:nowrap;">0</span><i class="vb" style="left:3217.8px;top:742px;background:#686a85"></i><span style="position:absolute;left:3239.9px;top:746.3px;font-size:26px;line-height:26px;font-weight:bold;color:#686a85;white-space:nowrap;">L</span><span style="position:absolute;left:3260.0px;top:746.3px;font-size:26px;line-height:26px;font-weight:bold;color:#686a85;white-space:nowrap;">0</span>
</section>
<section class="row">
<div class="card" style="top:856px"></div>
<span style="position:absolute;left:529.4px;top:894.9px;font-size:24.5px;line-height:24.5px;color:#0b0b0d;letter-spacing:1.06px;white-space:nowrap;-webkit-text-stroke:0.55px #0b0b0d;">apacheds-bootstrap-pa...</span>
<svg style="position:absolute;left:840.5px;top:892px;" width="32" height="28" viewBox="0 0 32 28" fill="none"><g fill="#2f73d1"><path d="M16 0.5 L31.5 8.2 L16 15.9 L0.5 8.2Z"/><path d="M3.7 12.2 L0.5 13.8 L16 21.5 L31.5 13.8 L28.3 12.2 L16 18.3Z"/><path d="M3.7 17.8 L0.5 19.4 L16 27.1 L31.5 19.4 L28.3 17.8 L16 23.9Z"/></g></svg>
<span class="r" style="position:absolute;left:528.5px;top:951.0px;font-size:25px;line-height:25px;color:#4f5168;letter-spacing:-0.67px;white-space:nowrap;">1.5.5</span>
<div class="badge unm" style="top:914px"></div>
<svg style="position:absolute;left:926.5px;top:925px;" width="21" height="21" viewBox="0 0 21 21" fill="none"><circle cx="10.5" cy="10.5" r="8.8" stroke="#cf3b2b" stroke-width="2.8"/><path d="M4.3 4.3 L16.7 16.7" stroke="#cf3b2b" stroke-width="2.8"/><path d="M5.5 15.5 L11.5 9.5" stroke="#111" stroke-width="2.6" stroke-linecap="round"/><path d="M14.8 6.2 A3.3 3.3 0 1 0 15.3 10.3" stroke="#111" stroke-width="1.7" fill="none"/></svg>
<span style="position:absolute;left:964.0px;top:923.1px;font-size:24.5px;line-height:24.5px;font-weight:bold;color:#cb392b;letter-spacing:0.01px;white-space:nowrap;">UNMAINTAINED</span>
<span class="r" style="position:absolute;left:1296.5px;top:923.1px;font-size:24.5px;line-height:24.5px;color:#0b0b0d;letter-spacing:0.68px;white-space:nowrap;">Apache-2.0</span>
<span class="r" style="position:absolute;left:1678.4px;top:923.1px;font-size:24.5px;line-height:24.5px;color:#0b0b0d;letter-spacing:0.57px;white-space:nowrap;">maven</span>
<div class="purl" style="top:914px"><span>pkg:maven/org.apache.directory.s…</span></div>
<i class="vb" style="left:2981px;top:918px;background:#d0432e"></i><span style="position:absolute;left:3002.9px;top:922.3px;font-size:26px;line-height:26px;font-weight:bold;color:#a52a1d;white-space:nowrap;">C</span><span style="position:absolute;left:3026.8px;top:922.3px;font-size:26px;line-height:26px;font-weight:bold;color:#a52a1d;white-space:nowrap;">0</span><i class="vb" style="left:3059px;top:918px;background:#ea5c2e"></i><span style="position:absolute;left:3079.8px;top:922.3px;font-size:26px;line-height:26px;font-weight:bold;color:#ea5c2e;white-space:nowrap;">H</span><span style="position:absolute;left:3106.7px;top:922.3px;font-size:26px;line-height:26px;font-weight:bold;color:#ea5c2e;white-space:nowrap;">0</span><i class="vb" style="left:3137px;top:918px;background:#d99b2e"></i><span style="position:absolute;left:3157.3px;top:922.3px;font-size:26px;line-height:26px;font-weight:bold;color:#d99b2e;white-space:nowrap;">M</span><span style="position:absolute;left:3186.5px;top:922.3px;font-size:26px;line-height:26px;font-weight:bold;color:#d99b2e;white-space:nowrap;">0</span><i class="vb" style="left:3217.8px;top:918px;background:#686a85"></i><span style="position:absolute;left:3239.9px;top:922.3px;font-size:26px;line-height:26px;font-weight:bold;color:#686a85;white-space:nowrap;">L</span><span style="position:absolute;left:3260.0px;top:922.3px;font-size:26px;line-height:26px;font-weight:bold;color:#686a85;white-space:nowrap;">0</span>
</section>
<section class="row">
<div class="card" style="top:1032px"></div>
<span style="position:absolute;left:529.4px;top:1070.9px;font-size:24.5px;line-height:24.5px;color:#0b0b0d;letter-spacing:1.00px;white-space:nowrap;-webkit-text-stroke:0.55px #0b0b0d;">apacheds-schema-boo...</span>
<svg style="position:absolute;left:840.5px;top:1068px;" width="32" height="28" viewBox="0 0 32 28" fill="none"><g fill="#2f73d1"><path d="M16 0.5 L31.5 8.2 L16 15.9 L0.5 8.2Z"/><path d="M3.7 12.2 L0.5 13.8 L16 21.5 L31.5 13.8 L28.3 12.2 L16 18.3Z"/><path d="M3.7 17.8 L0.5 19.4 L16 27.1 L31.5 19.4 L28.3 17.8 L16 23.9Z"/></g></svg>
<span class="r" style="position:absolute;left:528.5px;top:1127.0px;font-size:25px;line-height:25px;color:#4f5168;letter-spacing:-0.67px;white-space:nowrap;">1.5.5</span>
<div class="badge unm" style="top:1090px"></div>
<svg style="position:absolute;left:926.5px;top:1101px;" width="21" height="21" viewBox="0 0 21 21" fill="none"><circle cx="10.5" cy="10.5" r="8.8" stroke="#cf3b2b" stroke-width="2.8"/><path d="M4.3 4.3 L16.7 16.7" stroke="#cf3b2b" stroke-width="2.8"/><path d="M5.5 15.5 L11.5 9.5" stroke="#111" stroke-width="2.6" stroke-linecap="round"/><path d="M14.8 6.2 A3.3 3.3 0 1 0 15.3 10.3" stroke="#111" stroke-width="1.7" fill="none"/></svg>
<span style="position:absolute;left:964.0px;top:1099.1px;font-size:24.5px;line-height:24.5px;font-weight:bold;color:#cb392b;letter-spacing:0.01px;white-space:nowrap;">UNMAINTAINED</span>
<span class="r" style="position:absolute;left:1296.5px;top:1099.1px;font-size:24.5px;line-height:24.5px;color:#0b0b0d;letter-spacing:0.22px;white-space:nowrap;">Apache-2.0, OLDAP-2.8</span>
<span class="r" style="position:absolute;left:1678.4px;top:1099.1px;font-size:24.5px;line-height:24.5px;color:#0b0b0d;letter-spacing:0.57px;white-space:nowrap;">maven</span>
<div class="purl" style="top:1090px"><span>pkg:maven/org.apache.directory.s…</span></div>
<i class="vb" style="left:2981px;top:1094px;background:#d0432e"></i><span style="position:absolute;left:3002.9px;top:1098.3px;font-size:26px;line-height:26px;font-weight:bold;color:#a52a1d;white-space:nowrap;">C</span><span style="position:absolute;left:3026.8px;top:1098.3px;font-size:26px;line-height:26px;font-weight:bold;color:#a52a1d;white-space:nowrap;">0</span><i class="vb" style="left:3059px;top:1094px;background:#ea5c2e"></i><span style="position:absolute;left:3079.8px;top:1098.3px;font-size:26px;line-height:26px;font-weight:bold;color:#ea5c2e;white-space:nowrap;">H</span><span style="position:absolute;left:3106.7px;top:1098.3px;font-size:26px;line-height:26px;font-weight:bold;color:#ea5c2e;white-space:nowrap;">0</span><i class="vb" style="left:3137px;top:1094px;background:#d99b2e"></i><span style="position:absolute;left:3157.3px;top:1098.3px;font-size:26px;line-height:26px;font-weight:bold;color:#d99b2e;white-space:nowrap;">M</span><span style="position:absolute;left:3186.5px;top:1098.3px;font-size:26px;line-height:26px;font-weight:bold;color:#d99b2e;white-space:nowrap;">0</span><i class="vb" style="left:3217.8px;top:1094px;background:#686a85"></i><span style="position:absolute;left:3239.9px;top:1098.3px;font-size:26px;line-height:26px;font-weight:bold;color:#686a85;white-space:nowrap;">L</span><span style="position:absolute;left:3260.0px;top:1098.3px;font-size:26px;line-height:26px;font-weight:bold;color:#686a85;white-space:nowrap;">0</span>
</section>
<section class="row">
<div class="card" style="top:1208px"></div>
<span style="position:absolute;left:529.4px;top:1246.9px;font-size:24.5px;line-height:24.5px;color:#0b0b0d;letter-spacing:1.07px;white-space:nowrap;-webkit-text-stroke:0.55px #0b0b0d;">apacheds-schema-extr...</span>
<svg style="position:absolute;left:840.5px;top:1244px;" width="32" height="28" viewBox="0 0 32 28" fill="none"><g fill="#2f73d1"><path d="M16 0.5 L31.5 8.2 L16 15.9 L0.5 8.2Z"/><path d="M3.7 12.2 L0.5 13.8 L16 21.5 L31.5 13.8 L28.3 12.2 L16 18.3Z"/><path d="M3.7 17.8 L0.5 19.4 L16 27.1 L31.5 19.4 L28.3 17.8 L16 23.9Z"/></g></svg>
<span class="r" style="position:absolute;left:528.5px;top:1303.0px;font-size:25px;line-height:25px;color:#4f5168;letter-spacing:-0.67px;white-space:nowrap;">1.5.5</span>
<div class="badge unm" style="top:1266px"></div>
<svg style="position:absolute;left:926.5px;top:1277px;" width="21" height="21" viewBox="0 0 21 21" fill="none"><circle cx="10.5" cy="10.5" r="8.8" stroke="#cf3b2b" stroke-width="2.8"/><path d="M4.3 4.3 L16.7 16.7" stroke="#cf3b2b" stroke-width="2.8"/><path d="M5.5 15.5 L11.5 9.5" stroke="#111" stroke-width="2.6" stroke-linecap="round"/><path d="M14.8 6.2 A3.3 3.3 0 1 0 15.3 10.3" stroke="#111" stroke-width="1.7" fill="none"/></svg>
<span style="position:absolute;left:964.0px;top:1275.1px;font-size:24.5px;line-height:24.5px;font-weight:bold;color:#cb392b;letter-spacing:0.01px;white-space:nowrap;">UNMAINTAINED</span>
<span class="r" style="position:absolute;left:1296.5px;top:1275.1px;font-size:24.5px;line-height:24.5px;color:#0b0b0d;letter-spacing:0.68px;white-space:nowrap;">Apache-2.0</span>
<span class="r" style="position:absolute;left:1678.4px;top:1275.1px;font-size:24.5px;line-height:24.5px;color:#0b0b0d;letter-spacing:0.57px;white-space:nowrap;">maven</span>
<div class="purl" style="top:1266px"><span>pkg:maven/org.apache.directory.s…</span></div>
<i class="vb" style="left:2981px;top:1270px;background:#d0432e"></i><span style="position:absolute;left:3002.9px;top:1274.3px;font-size:26px;line-height:26px;font-weight:bold;color:#a52a1d;white-space:nowrap;">C</span><span style="position:absolute;left:3026.8px;top:1274.3px;font-size:26px;line-height:26px;font-weight:bold;color:#a52a1d;white-space:nowrap;">0</span><i class="vb" style="left:3059px;top:1270px;background:#ea5c2e"></i><span style="position:absolute;left:3079.8px;top:1274.3px;font-size:26px;line-height:26px;font-weight:bold;color:#ea5c2e;white-space:nowrap;">H</span><span style="position:absolute;left:3106.7px;top:1274.3px;font-size:26px;line-height:26px;font-weight:bold;color:#ea5c2e;white-space:nowrap;">0</span><i class="vb" style="left:3137px;top:1270px;background:#d99b2e"></i><span style="position:absolute;left:3157.3px;top:1274.3px;font-size:26px;line-height:26px;font-weight:bold;color:#d99b2e;white-space:nowrap;">M</span><span style="position:absolute;left:3186.5px;top:1274.3px;font-size:26px;line-height:26px;font-weight:bold;color:#d99b2e;white-space:nowrap;">0</span><i class="vb" style="left:3217.8px;top:1270px;background:#686a85"></i><span style="position:absolute;left:3239.9px;top:1274.3px;font-size:26px;line-height:26px;font-weight:bold;color:#686a85;white-space:nowrap;">L</span><span style="position:absolute;left:3260.0px;top:1274.3px;font-size:26px;line-height:26px;font-weight:bold;color:#686a85;white-space:nowrap;">0</span>
</section>
<section class="row">
<div class="card" style="top:1384px"></div>
<span style="position:absolute;left:529.4px;top:1422.9px;font-size:24.5px;line-height:24.5px;color:#0b0b0d;letter-spacing:0.96px;white-space:nowrap;-webkit-text-stroke:0.55px #0b0b0d;">apacheds-schema-regi...</span>
<svg style="position:absolute;left:840.5px;top:1420px;" width="32" height="28" viewBox="0 0 32 28" fill="none"><g fill="#2f73d1"><path d="M16 0.5 L31.5 8.2 L16 15.9 L0.5 8.2Z"/><path d="M3.7 12.2 L0.5 13.8 L16 21.5 L31.5 13.8 L28.3 12.2 L16 18.3Z"/><path d="M3.7 17.8 L0.5 19.4 L16 27.1 L31.5 19.4 L28.3 17.8 L16 23.9Z"/></g></svg>
<span class="r" style="position:absolute;left:528.5px;top:1479.0px;font-size:25px;line-height:25px;color:#4f5168;letter-spacing:-0.67px;white-space:nowrap;">1.5.5</span>
<div class="badge unm" style="top:1442px"></div>
<svg style="position:absolute;left:926.5px;top:1453px;" width="21" height="21" viewBox="0 0 21 21" fill="none"><circle cx="10.5" cy="10.5" r="8.8" stroke="#cf3b2b" stroke-width="2.8"/><path d="M4.3 4.3 L16.7 16.7" stroke="#cf3b2b" stroke-width="2.8"/><path d="M5.5 15.5 L11.5 9.5" stroke="#111" stroke-width="2.6" stroke-linecap="round"/><path d="M14.8 6.2 A3.3 3.3 0 1 0 15.3 10.3" stroke="#111" stroke-width="1.7" fill="none"/></svg>
<span style="position:absolute;left:964.0px;top:1451.1px;font-size:24.5px;line-height:24.5px;font-weight:bold;color:#cb392b;letter-spacing:0.01px;white-space:nowrap;">UNMAINTAINED</span>
<span class="r" style="position:absolute;left:1296.5px;top:1451.1px;font-size:24.5px;line-height:24.5px;color:#0b0b0d;letter-spacing:0.68px;white-space:nowrap;">Apache-2.0</span>
<span class="r" style="position:absolute;left:1678.4px;top:1451.1px;font-size:24.5px;line-height:24.5px;color:#0b0b0d;letter-spacing:0.57px;white-space:nowrap;">maven</span>
<div class="purl" style="top:1442px"><span>pkg:maven/org.apache.directory.s…</span></div>
<i class="vb" style="left:2981px;top:1446px;background:#d0432e"></i><span style="position:absolute;left:3002.9px;top:1450.3px;font-size:26px;line-height:26px;font-weight:bold;color:#a52a1d;white-space:nowrap;">C</span><span style="position:absolute;left:3026.8px;top:1450.3px;font-size:26px;line-height:26px;font-weight:bold;color:#a52a1d;white-space:nowrap;">0</span><i class="vb" style="left:3059px;top:1446px;background:#ea5c2e"></i><span style="position:absolute;left:3079.8px;top:1450.3px;font-size:26px;line-height:26px;font-weight:bold;color:#ea5c2e;white-space:nowrap;">H</span><span style="position:absolute;left:3106.7px;top:1450.3px;font-size:26px;line-height:26px;font-weight:bold;color:#ea5c2e;white-space:nowrap;">0</span><i class="vb" style="left:3137px;top:1446px;background:#d99b2e"></i><span style="position:absolute;left:3157.3px;top:1450.3px;font-size:26px;line-height:26px;font-weight:bold;color:#d99b2e;white-space:nowrap;">M</span><span style="position:absolute;left:3186.5px;top:1450.3px;font-size:26px;line-height:26px;font-weight:bold;color:#d99b2e;white-space:nowrap;">0</span><i class="vb" style="left:3217.8px;top:1446px;background:#686a85"></i><span style="position:absolute;left:3239.9px;top:1450.3px;font-size:26px;line-height:26px;font-weight:bold;color:#686a85;white-space:nowrap;">L</span><span style="position:absolute;left:3260.0px;top:1450.3px;font-size:26px;line-height:26px;font-weight:bold;color:#686a85;white-space:nowrap;">0</span>
</section>
<section class="row">
<div class="card" style="top:1560px"></div>
<span style="position:absolute;left:529.4px;top:1598.9px;font-size:24.5px;line-height:24.5px;color:#0b0b0d;letter-spacing:1.09px;white-space:nowrap;-webkit-text-stroke:0.55px #0b0b0d;">commons-collections</span>
<svg style="position:absolute;left:793.5px;top:1596px;" width="32" height="28" viewBox="0 0 32 28" fill="none"><g fill="#2f73d1"><path d="M16 0.5 L31.5 8.2 L16 15.9 L0.5 8.2Z"/><path d="M3.7 12.2 L0.5 13.8 L16 21.5 L31.5 13.8 L28.3 12.2 L16 18.3Z"/><path d="M3.7 17.8 L0.5 19.4 L16 27.1 L31.5 19.4 L28.3 17.8 L16 23.9Z"/></g></svg>
<span class="r" style="position:absolute;left:529.4px;top:1655.0px;font-size:25px;line-height:25px;color:#4f5168;letter-spacing:0.52px;white-space:nowrap;">3.2.2</span>
<div class="badge eol" style="top:1618px"></div>
<svg style="position:absolute;left:924.5px;top:1627.5px;" width="25" height="25" viewBox="0 0 25 25" fill="none"><circle cx="12.5" cy="12.5" r="10.6" stroke="#d9982b" stroke-width="3"/><path d="M5.3 19.7 L19.7 5.3" stroke="#d9982b" stroke-width="3"/></svg>
<span style="position:absolute;left:964.6px;top:1627.6px;font-size:24px;line-height:24px;font-weight:bold;color:#d9982b;letter-spacing:-0.50px;white-space:nowrap;">CLOSE TO EOL</span>
<span class="r" style="position:absolute;left:1296.5px;top:1627.1px;font-size:24.5px;line-height:24.5px;color:#0b0b0d;letter-spacing:0.68px;white-space:nowrap;">Apache-2.0</span>
<span class="r" style="position:absolute;left:1678.4px;top:1627.1px;font-size:24.5px;line-height:24.5px;color:#0b0b0d;letter-spacing:0.57px;white-space:nowrap;">maven</span>
<div class="purl" style="top:1618px"><span>pkg:maven/commons-collections/co…</span></div>
<span style="position:absolute;left:2599.0px;top:1627.1px;font-size:24.5px;line-height:24.5px;color:#0b0b0d;letter-spacing:0.57px;white-space:nowrap;-webkit-text-stroke:0.55px #0b0b0d;">The Apache Software Foun...</span>
<i class="vb" style="left:2981px;top:1622px;background:#d0432e"></i><span style="position:absolute;left:3002.9px;top:1626.3px;font-size:26px;line-height:26px;font-weight:bold;color:#a52a1d;white-space:nowrap;">C</span><span style="position:absolute;left:3026.8px;top:1626.3px;font-size:26px;line-height:26px;font-weight:bold;color:#a52a1d;white-space:nowrap;">0</span><i class="vb" style="left:3059px;top:1622px;background:#ea5c2e"></i><span style="position:absolute;left:3079.8px;top:1626.3px;font-size:26px;line-height:26px;font-weight:bold;color:#ea5c2e;white-space:nowrap;">H</span><span style="position:absolute;left:3106.7px;top:1626.3px;font-size:26px;line-height:26px;font-weight:bold;color:#ea5c2e;white-space:nowrap;">0</span><i class="vb" style="left:3137px;top:1622px;background:#d99b2e"></i><span style="position:absolute;left:3157.3px;top:1626.3px;font-size:26px;line-height:26px;font-weight:bold;color:#d99b2e;white-space:nowrap;">M</span><span style="position:absolute;left:3186.5px;top:1626.3px;font-size:26px;line-height:26px;font-weight:bold;color:#d99b2e;white-space:nowrap;">0</span><i class="vb" style="left:3217.8px;top:1622px;background:#686a85"></i><span style="position:absolute;left:3239.9px;top:1626.3px;font-size:26px;line-height:26px;font-weight:bold;color:#686a85;white-space:nowrap;">L</span><span style="position:absolute;left:3260.0px;top:1626.3px;font-size:26px;line-height:26px;font-weight:bold;color:#686a85;white-space:nowrap;">0</span>
</section>
<section class="row">
<div class="card" style="top:1736px"></div>
<span style="position:absolute;left:529.4px;top:1774.9px;font-size:24.5px;line-height:24.5px;color:#0b0b0d;letter-spacing:1.15px;white-space:nowrap;-webkit-text-stroke:0.55px #0b0b0d;">commons-configuration</span>
<svg style="position:absolute;left:822.0px;top:1772px;" width="32" height="28" viewBox="0 0 32 28" fill="none"><g fill="#2f73d1"><path d="M16 0.5 L31.5 8.2 L16 15.9 L0.5 8.2Z"/><path d="M3.7 12.2 L0.5 13.8 L16 21.5 L31.5 13.8 L28.3 12.2 L16 18.3Z"/><path d="M3.7 17.8 L0.5 19.4 L16 27.1 L31.5 19.4 L28.3 17.8 L16 23.9Z"/></g></svg>
<span class="r" style="position:absolute;left:528.5px;top:1831.0px;font-size:25px;line-height:25px;color:#4f5168;letter-spacing:-2.10px;white-space:nowrap;">1.10</span>
<div class="badge unm" style="top:1794px"></div>
<svg style="position:absolute;left:926.5px;top:1805px;" width="21" height="21" viewBox="0 0 21 21" fill="none"><circle cx="10.5" cy="10.5" r="8.8" stroke="#cf3b2b" stroke-width="2.8"/><path d="M4.3 4.3 L16.7 16.7" stroke="#cf3b2b" stroke-width="2.8"/><path d="M5.5 15.5 L11.5 9.5" stroke="#111" stroke-width="2.6" stroke-linecap="round"/><path d="M14.8 6.2 A3.3 3.3 0 1 0 15.3 10.3" stroke="#111" stroke-width="1.7" fill="none"/></svg>
<span style="position:absolute;left:964.0px;top:1803.1px;font-size:24.5px;line-height:24.5px;font-weight:bold;color:#cb392b;letter-spacing:0.01px;white-space:nowrap;">UNMAINTAINED</span>
<span class="r" style="position:absolute;left:1296.5px;top:1803.1px;font-size:24.5px;line-height:24.5px;color:#0b0b0d;letter-spacing:0.68px;white-space:nowrap;">Apache-2.0</span>
<span class="r" style="position:absolute;left:1678.4px;top:1803.1px;font-size:24.5px;line-height:24.5px;color:#0b0b0d;letter-spacing:0.57px;white-space:nowrap;">maven</span>
<div class="purl" style="top:1794px"><span>pkg:maven/commons-configuration/…</span></div>
<span style="position:absolute;left:2599.0px;top:1803.1px;font-size:24.5px;line-height:24.5px;color:#0b0b0d;letter-spacing:0.57px;white-space:nowrap;-webkit-text-stroke:0.55px #0b0b0d;">The Apache Software Foun...</span>
<i class="vb" style="left:2981px;top:1798px;background:#d0432e"></i><span style="position:absolute;left:3002.9px;top:1802.3px;font-size:26px;line-height:26px;font-weight:bold;color:#a52a1d;white-space:nowrap;">C</span><span style="position:absolute;left:3026.8px;top:1802.3px;font-size:26px;line-height:26px;font-weight:bold;color:#a52a1d;white-space:nowrap;">0</span><i class="vb" style="left:3059px;top:1798px;background:#ea5c2e"></i><span style="position:absolute;left:3079.8px;top:1802.3px;font-size:26px;line-height:26px;font-weight:bold;color:#ea5c2e;white-space:nowrap;">H</span><span style="position:absolute;left:3106.7px;top:1802.3px;font-size:26px;line-height:26px;font-weight:bold;color:#ea5c2e;white-space:nowrap;">0</span><i class="vb" style="left:3137px;top:1798px;background:#d99b2e"></i><span style="position:absolute;left:3157.3px;top:1802.3px;font-size:26px;line-height:26px;font-weight:bold;color:#d99b2e;white-space:nowrap;">M</span><span style="position:absolute;left:3186.5px;top:1802.3px;font-size:26px;line-height:26px;font-weight:bold;color:#d99b2e;white-space:nowrap;">0</span><i class="vb" style="left:3217.8px;top:1798px;background:#686a85"></i><span style="position:absolute;left:3239.9px;top:1802.3px;font-size:26px;line-height:26px;font-weight:bold;color:#686a85;white-space:nowrap;">L</span><span style="position:absolute;left:3260.0px;top:1802.3px;font-size:26px;line-height:26px;font-weight:bold;color:#686a85;white-space:nowrap;">0</span>
</section>
<section class="row">
<div class="card" style="top:1912px"></div>
<span style="position:absolute;left:529.4px;top:1950.9px;font-size:24.5px;line-height:24.5px;color:#0b0b0d;letter-spacing:1.22px;white-space:nowrap;-webkit-text-stroke:0.55px #0b0b0d;">commons-lang</span>
<svg style="position:absolute;left:718.5px;top:1948px;" width="32" height="28" viewBox="0 0 32 28" fill="none"><g fill="#2f73d1"><path d="M16 0.5 L31.5 8.2 L16 15.9 L0.5 8.2Z"/><path d="M3.7 12.2 L0.5 13.8 L16 21.5 L31.5 13.8 L28.3 12.2 L16 18.3Z"/><path d="M3.7 17.8 L0.5 19.4 L16 27.1 L31.5 19.4 L28.3 17.8 L16 23.9Z"/></g></svg>
<span class="r" style="position:absolute;left:529.1px;top:2007.0px;font-size:25px;line-height:25px;color:#4f5168;letter-spacing:8.79px;white-space:nowrap;">2.6</span>
<div class="badge unm" style="top:1970px"></div>
<svg style="position:absolute;left:926.5px;top:1981px;" width="21" height="21" viewBox="0 0 21 21" fill="none"><circle cx="10.5" cy="10.5" r="8.8" stroke="#cf3b2b" stroke-width="2.8"/><path d="M4.3 4.3 L16.7 16.7" stroke="#cf3b2b" stroke-width="2.8"/><path d="M5.5 15.5 L11.5 9.5" stroke="#111" stroke-width="2.6" stroke-linecap="round"/><path d="M14.8 6.2 A3.3 3.3 0 1 0 15.3 10.3" stroke="#111" stroke-width="1.7" fill="none"/></svg>
<span style="position:absolute;left:964.0px;top:1979.1px;font-size:24.5px;line-height:24.5px;font-weight:bold;color:#cb392b;letter-spacing:0.01px;white-space:nowrap;">UNMAINTAINED</span>
<span class="r" style="position:absolute;left:1296.5px;top:1979.1px;font-size:24.5px;line-height:24.5px;color:#0b0b0d;letter-spacing:0.68px;white-space:nowrap;">Apache-2.0</span>
<span class="r" style="position:absolute;left:1678.4px;top:1979.1px;font-size:24.5px;line-height:24.5px;color:#0b0b0d;letter-spacing:0.57px;white-space:nowrap;">maven</span>
<div class="purl" style="top:1970px"><span>pkg:maven/commons-lang/commons-l…</span></div>
<span style="position:absolute;left:2599.0px;top:1979.1px;font-size:24.5px;line-height:24.5px;color:#0b0b0d;letter-spacing:0.57px;white-space:nowrap;-webkit-text-stroke:0.55px #0b0b0d;">The Apache Software Foun...</span>
<i class="vb" style="left:2981px;top:1974px;background:#d0432e"></i><span style="position:absolute;left:3002.9px;top:1978.3px;font-size:26px;line-height:26px;font-weight:bold;color:#a52a1d;white-space:nowrap;">C</span><span style="position:absolute;left:3026.8px;top:1978.3px;font-size:26px;line-height:26px;font-weight:bold;color:#a52a1d;white-space:nowrap;">0</span><i class="vb" style="left:3059px;top:1974px;background:#ea5c2e"></i><span style="position:absolute;left:3079.8px;top:1978.3px;font-size:26px;line-height:26px;font-weight:bold;color:#ea5c2e;white-space:nowrap;">H</span><span style="position:absolute;left:3106.7px;top:1978.3px;font-size:26px;line-height:26px;font-weight:bold;color:#ea5c2e;white-space:nowrap;">0</span><i class="vb" style="left:3137px;top:1974px;background:#d99b2e"></i><span style="position:absolute;left:3157.3px;top:1978.3px;font-size:26px;line-height:26px;font-weight:bold;color:#d99b2e;white-space:nowrap;">M</span><span style="position:absolute;left:3186.5px;top:1978.3px;font-size:26px;line-height:26px;font-weight:bold;color:#d99b2e;white-space:nowrap;">0</span><i class="vb" style="left:3217.8px;top:1974px;background:#686a85"></i><span style="position:absolute;left:3239.9px;top:1978.3px;font-size:26px;line-height:26px;font-weight:bold;color:#686a85;white-space:nowrap;">L</span><span style="position:absolute;left:3260.0px;top:1978.3px;font-size:26px;line-height:26px;font-weight:bold;color:#686a85;white-space:nowrap;">0</span>
</section>
</div>
<div class="redbox"></div>
<div class="rstrip"></div><div class="rthumb"></div><div class="odot"></div>
<div class="askai"><div class="askai-in"></div></div>
<svg style="position:absolute;left:3170.5px;top:1837px;z-index:31;" width="39" height="42" viewBox="0 0 39 42" fill="none"><defs><radialGradient id="rb" cx="0.38" cy="0.28" r="0.8"><stop offset="0" stop-color="#f3ccff"/><stop offset="0.55" stop-color="#dcaeff"/><stop offset="1" stop-color="#9a6cff"/></radialGradient></defs>
<path d="M19.5 4.5 V8" stroke="#e3b4ff" stroke-width="1.6"/><circle cx="19.5" cy="3" r="1.8" fill="#e9bcff"/>
<path d="M3.5 21 L0.5 30 L6 29Z M35.5 21 L38.5 30 L33 29Z" fill="#c79bff"/>
<circle cx="19.5" cy="24" r="16.3" fill="url(#rb)"/>
<circle cx="12.2" cy="19.8" r="4.6" fill="#5a3fc0"/><circle cx="26.3" cy="19.8" r="4.6" fill="#5a3fc0"/>
<circle cx="12.6" cy="19.6" r="1.5" fill="#fff"/><circle cx="26.7" cy="19.6" r="1.5" fill="#fff"/>
<path d="M16.8 22 H22 L19.4 25Z" fill="#4a2fb0" stroke="#4a2fb0" stroke-width="0.8" stroke-linejoin="round"/></svg>
<span class="askai-t" style="position:absolute;left:3217.7px;top:1843.4px;font-size:29px;line-height:29px;font-weight:bold;color:#7a4fd0;letter-spacing:0.49px;white-space:nowrap;z-index:31;">Ask AI</span>
</main>
</body></html>
